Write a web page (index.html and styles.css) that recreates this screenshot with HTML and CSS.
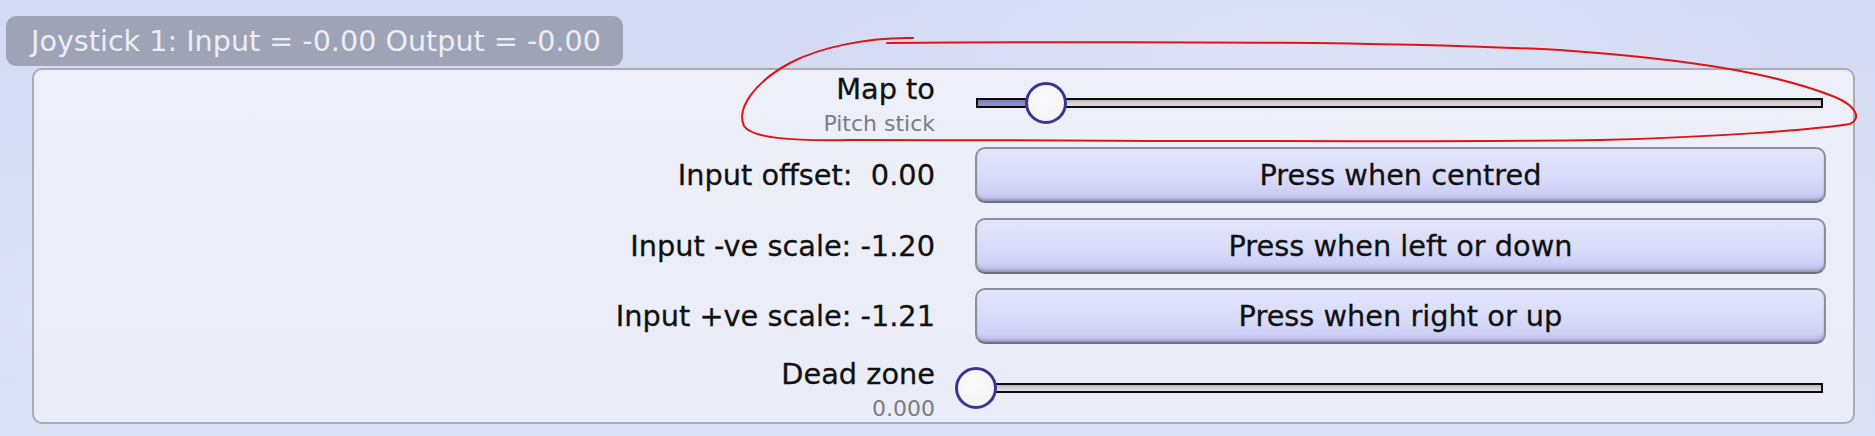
FILE: index.html
```html
<!DOCTYPE html>
<html>
<head>
<meta charset="utf-8">
<title>Joystick</title>
<link rel="stylesheet" href="styles.css">
</head>
<body>
<div class="page">
  <div class="tab">Joystick 1: Input = -0.00 Output = -0.00</div>
  <div class="panel">
    <div class="label stack">
      <div class="main">Map to</div>
      <div class="sub">Pitch stick</div>
    </div>
    <div class="slider">
      <div class="track"><div class="fill" style="width: 8.26%"></div></div>
      <div class="knob" style="left: 8.26%"></div>
    </div>

    <div class="label line">Input offset:  0.00</div>
    <button class="btn">Press when centred</button>

    <div class="label line">Input -ve scale: -1.20</div>
    <button class="btn">Press when left or down</button>

    <div class="label line">Input +ve scale: -1.21</div>
    <button class="btn">Press when right or up</button>

    <div class="label stack">
      <div class="main">Dead zone</div>
      <div class="sub">0.000</div>
    </div>
    <div class="slider">
      <div class="track"><div class="fill" style="width: 0%"></div></div>
      <div class="knob" style="left: 0%"></div>
    </div>
  </div>
</div>
<svg class="annotation" width="1875" height="436" viewBox="0 0 1875 436">
  <path d="M 913 38 C 870 37, 820 47, 790 63 C 755 82, 736 108, 744 126 C 752 138, 790 141, 850 140 C 1100 140, 1400 143, 1600 140 C 1720 137, 1810 130, 1850 124 C 1862 118, 1856 106, 1835 97 C 1780 75, 1700 60, 1560 50 C 1400 42, 1200 41, 887 43" fill="none" stroke="#e01414" stroke-width="2" stroke-linecap="round"/>
</svg>
</body>
</html>
```
FILE: styles.css
```css
html, body {
  margin: 0;
  padding: 0;
}
body {
  width: 1875px;
  height: 436px;
  overflow: hidden;
  position: relative;
  font-family: "DejaVu Sans", "Noto Sans", sans-serif;
  background:
    radial-gradient(ellipse 400px 120px at 300px 300px, rgba(255,255,255,0.25), rgba(255,255,255,0)),
    radial-gradient(ellipse 500px 150px at 1300px 40px, rgba(255,255,255,0.2), rgba(255,255,255,0)),
    linear-gradient(180deg, #d3daf3 0%, #d9dff4 60%, #dbe1f5 100%);
}
.page {
  padding: 16px 0 0 6px;
}
.tab {
  width: 617px;
  height: 50px;
  box-sizing: border-box;
  padding-left: 25px;
  line-height: 50px;
  font-size: 28.6px;
  color: #eceef6;
  background: #9ea3b5;
  border-radius: 10px;
  white-space: nowrap;
}
.panel {
  margin: 2px 20px 0 26px;
  height: 356px;
  box-sizing: border-box;
  border: 2px solid #a9abb8;
  border-radius: 10px;
  background: linear-gradient(180deg, #edeff9 0%, #eaedf8 100%);
  padding: 2px 27px 0 0;
  display: grid;
  grid-template-columns: 1fr 851px;
  grid-template-rows: 75px 70.5px 70.5px 69px 65px;
  column-gap: 40px;
}
.label {
  text-align: right;
  color: #111;
  font-size: 28.8px;
  align-self: start;
  -webkit-text-stroke: 0.3px #111;
}
.line {
  line-height: 56px;
  white-space: pre;
}
.stack .main {
  line-height: 34px;
}
.stack .sub {
  margin-top: 3px;
  line-height: 30px;
  font-size: 22px;
  color: #7b7c86;
  -webkit-text-stroke: 0;
}
.slider {
  position: relative;
  align-self: start;
  margin: 10px 3px 0 1px;
  height: 42px;
  display: flex;
  align-items: center;
}
.track {
  flex: 1;
  height: 10px;
  box-sizing: border-box;
  border: 2px solid #0c0c0c;
  background: linear-gradient(180deg, #b4b4b8 0%, #d2d2d6 45%, #dedee2 100%);
  display: flex;
}
.fill {
  height: 100%;
  background: linear-gradient(180deg, #7f7fb4 0%, #9494c4 100%);
}
.knob {
  position: absolute;
  top: 0;
  width: 42px;
  height: 42px;
  margin-left: -21px;
  box-sizing: border-box;
  border: 3px solid #3b3592;
  border-radius: 50%;
  background: radial-gradient(circle at 45% 40%, #fbfbfc 0%, #f2f2f6 100%);
}
.btn {
  align-self: start;
  width: 851px;
  height: 56px;
  box-sizing: border-box;
  margin: 0;
  padding: 0;
  border: 2px solid #8e8f9a;
  border-bottom-color: #6d6e82;
  border-radius: 10px;
  background: linear-gradient(180deg, #e3e5fb 0%, #d8dbfa 55%, #cdd0f6 85%, #b4b6dc 100%);
  box-shadow: inset 0 -2px 2px rgba(90, 92, 130, 0.35);
  font-family: "DejaVu Sans", "Noto Sans", sans-serif;
  font-size: 28.8px;
  line-height: 52px;
  color: #111;
  -webkit-text-stroke: 0.3px #111;
  text-align: center;
}
.annotation {
  position: absolute;
  top: 0;
  left: 0;
  pointer-events: none;
}
```
